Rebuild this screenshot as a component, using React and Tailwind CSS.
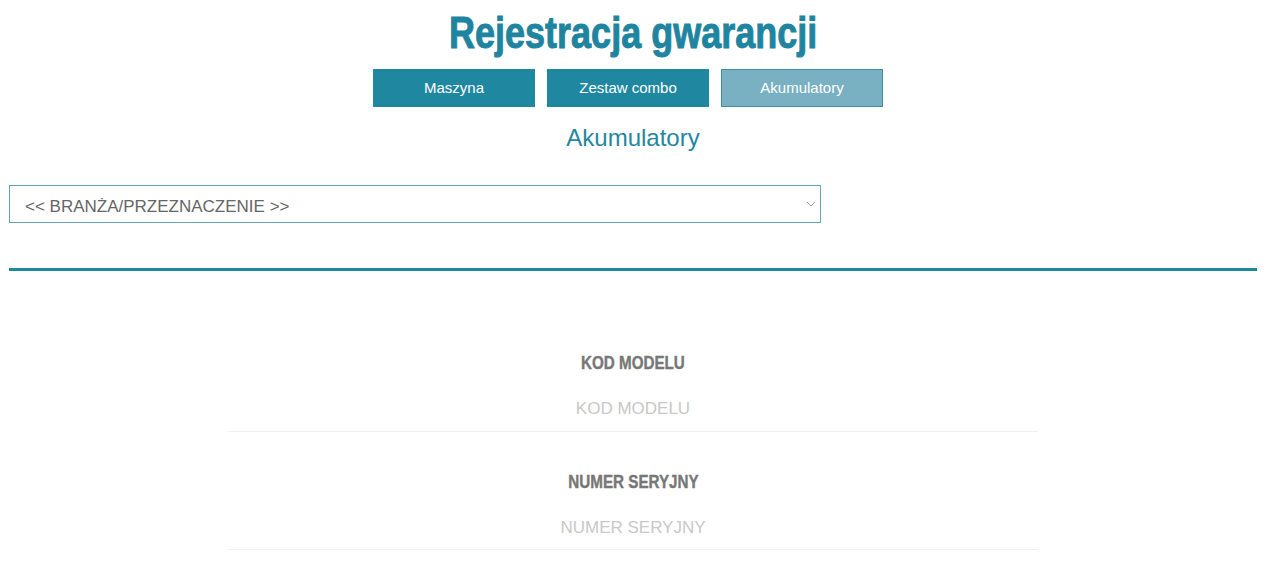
import { useState } from "react";

const tabs = ["Maszyna", "Zestaw combo", "Akumulatory"];

function Field({ label, value, onChange }) {
  return (
    <div className="flex flex-col items-center">
      <label className="inline-block scale-x-[0.8] font-bold text-[19px] text-[#777] leading-none [-webkit-text-stroke:0.4px_#777]">
        {label}
      </label>
      <input
        type="text"
        placeholder={label}
        value={value}
        onChange={onChange}
        className="mt-[24px] w-[810px] pb-[9px] text-center text-[17px] text-[#666] placeholder:text-[#c8c8c8] border-b border-[#f0f0f0] outline-none"
      />
    </div>
  );
}

export default function App() {
  const [active, setActive] = useState("Akumulatory");
  const [branza, setBranza] = useState("");
  const [kod, setKod] = useState("");
  const [numer, setNumer] = useState("");

  return (
    <main className="min-h-screen w-[1266px] bg-white font-['Liberation_Sans',sans-serif]">
      <div className="pt-[7px] flex justify-center">
        <h1 className="inline-block scale-x-[0.8] font-bold text-[45px] leading-[52px] text-[#1f84a0] [-webkit-text-stroke:1px_#1f84a0]">
          Rejestracja gwarancji
        </h1>
      </div>

      <div className="mt-[10px] mr-[10px] flex justify-center gap-[12px]">
        {tabs.map((t) => (
          <button
            key={t}
            onClick={() => setActive(t)}
            className={
              t === active
                ? "w-[162px] h-[38px] border border-[#3f8fa3] bg-[#79b0c2] text-white text-[15px]"
                : "w-[162px] h-[38px] border border-[#1f87a0] bg-[#1f87a0] text-white text-[15px]"
            }
          >
            {t}
          </button>
        ))}
      </div>

      <h2 className="mt-[16px] text-center text-[24px] leading-[30px] text-[#1f87a0]">
        {active}
      </h2>

      <div className="px-[9px] mt-[32px]">
        <div className="relative w-[812px]">
          <select
            value={branza}
            onChange={(e) => setBranza(e.target.value)}
            className="w-full h-[38px] appearance-none border border-[#5fa9b6] bg-white pl-[15px] pt-[6px] text-[17px] text-[#666] outline-none"
          >
            <option value="">{"<< BRANŻA/PRZEZNACZENIE >>"}</option>
          </select>
          <svg
            className="pointer-events-none absolute right-[5px] top-[15px]"
            width="10"
            height="8"
            viewBox="0 0 10 8"
            fill="none"
          >
            <path d="M1 2l4 4 4-4" stroke="#999" strokeWidth="1" />
          </svg>
        </div>

        <div className="mt-[45px] h-[3px] bg-[#1f87a0]" />
      </div>

      <div className="mt-[82px] flex flex-col items-center gap-[40px]">
        <Field label="KOD MODELU" value={kod} onChange={(e) => setKod(e.target.value)} />
        <Field label="NUMER SERYJNY" value={numer} onChange={(e) => setNumer(e.target.value)} />
      </div>
    </main>
  );
}
